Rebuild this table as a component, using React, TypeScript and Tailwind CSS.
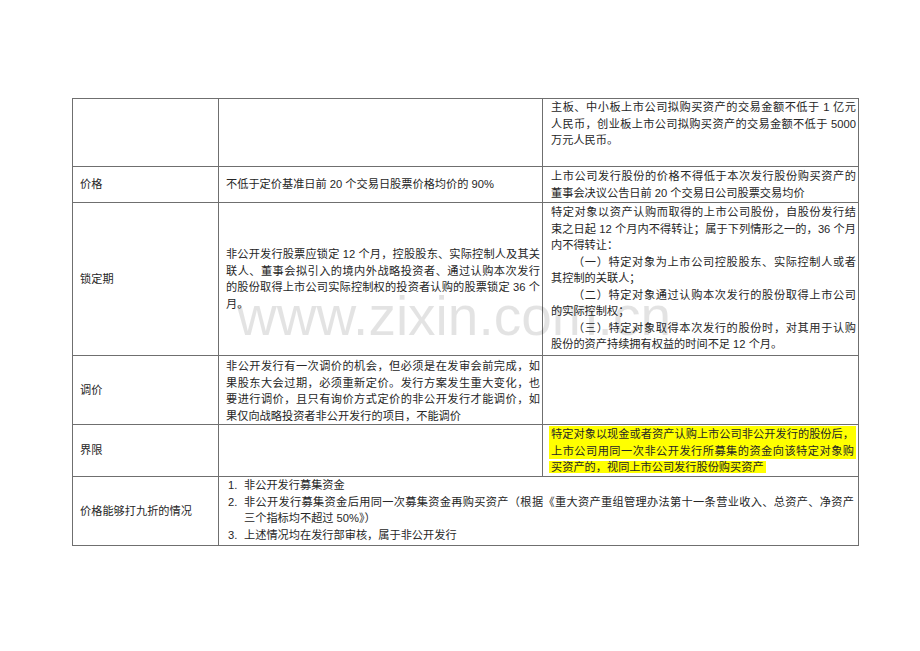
import React from "react";

const font = "font-['Liberation_Sans','Noto_Sans_CJK_SC',sans-serif]";

function Line({ text, full, indent }: { text: string; full?: boolean; indent?: boolean }) {
  return (
    <div
      className={`h-[16.5px] leading-[16.5px] ${full ? "text-justify [text-align-last:justify]" : ""} ${
        indent ? "pl-[22px]" : ""
      }`}
    >
      {text}
    </div>
  );
}

function Label({ text }: { text: string }) {
  return (
    <div className="flex items-center border-r border-b border-[#6f6f6f] pl-[7px]">
      <span>{text}</span>
    </div>
  );
}

export default function App() {
  return (
    <div className={`h-[651px] w-[920px] bg-white text-[11.2px] text-[#262626] ${font}`}>
      <div className="relative pt-[98px] pl-[72px]">
        <div className="grid w-[787px] grid-cols-[146px_324px_316px] grid-rows-[68px_36px_153px_69px_52px_69px] border-t border-l border-[#6f6f6f]">
          {/* row 1 */}
          <div className="border-r border-b border-[#6f6f6f]" />
          <div className="border-r border-b border-[#6f6f6f]" />
          <div className="border-r border-b border-[#6f6f6f] pl-2 pr-[2px]">
            <Line full text="主板、中小板上市公司拟购买资产的交易金额不低于 1 亿元" />
            <Line full text="人民币，创业板上市公司拟购买资产的交易金额不低于 5000" />
            <Line text="万元人民币。" />
          </div>

          {/* row 2 */}
          <Label text="价格" />
          <div className="flex items-center border-r border-b border-[#6f6f6f] pl-[7px]">
            不低于定价基准日前 20 个交易日股票价格均价的 90%
          </div>
          <div className="border-r border-b border-[#6f6f6f] pl-2 pr-[2px] pt-px">
            <Line full text="上市公司发行股份的价格不得低于本次发行股份购买资产的" />
            <Line text="董事会决议公告日前 20 个交易日公司股票交易均价" />
          </div>

          {/* row 3 */}
          <Label text="锁定期" />
          <div className="flex flex-col justify-center border-r border-b border-[#6f6f6f] pl-[7px] pr-[2px]">
            <Line full text="非公开发行股票应锁定 12 个月，控股股东、实际控制人及其关" />
            <Line full text="联人、董事会拟引入的境内外战略投资者、通过认购本次发行" />
            <Line full text="的股份取得上市公司实际控制权的投资者认购的股票锁定 36 个" />
            <Line text="月。" />
          </div>
          <div className="border-r border-b border-[#6f6f6f] pl-2 pr-[2px] pt-px">
            <Line full text="特定对象以资产认购而取得的上市公司股份，自股份发行结" />
            <Line full text="束之日起 12 个月内不得转让；属于下列情形之一的，36 个月" />
            <Line text="内不得转让：" />
            <Line full indent text="（一）特定对象为上市公司控股股东、实际控制人或者" />
            <Line text="其控制的关联人；" />
            <Line full indent text="（二）特定对象通过认购本次发行的股份取得上市公司" />
            <Line text="的实际控制权；" />
            <Line full indent text="（三）特定对象取得本次发行的股份时，对其用于认购" />
            <Line text="股份的资产持续拥有权益的时间不足 12 个月。" />
          </div>

          {/* row 4 */}
          <Label text="调价" />
          <div className="border-r border-b border-[#6f6f6f] pl-[7px] pr-[2px] pt-[2px]">
            <Line full text="非公开发行有一次调价的机会，但必须是在发审会前完成，如" />
            <Line full text="果股东大会过期，必须重新定价。发行方案发生重大变化，也" />
            <Line full text="要进行调价，且只有询价方式定价的非公开发行才能调价，如" />
            <Line text="果仅向战略投资者非公开发行的项目，不能调价" />
          </div>
          <div className="border-r border-b border-[#6f6f6f]" />

          {/* row 5 */}
          <Label text="界限" />
          <div className="border-r border-b border-[#6f6f6f]" />
          <div className="border-r border-b border-[#6f6f6f] pl-[6px] pr-[2px] pt-px">
            <div className="bg-[#ffff00] px-[2px]">
              <Line full text="特定对象以现金或者资产认购上市公司非公开发行的股份后，" />
              <Line full text="上市公司用同一次非公开发行所募集的资金向该特定对象购" />
            </div>
            <div className="h-[16.5px] leading-[16.5px]">
              <span className="bg-[#ffff00] px-[2px]">买资产的，视同上市公司发行股份购买资产</span>
            </div>
          </div>

          {/* row 6 */}
          <Label text="价格能够打九折的情况" />
          <div className="col-span-2 border-r border-b border-[#6f6f6f] pr-[4px]">
            <div className="flex">
              <span className="w-[25px] pl-[9px]">1.</span>
              <div className="flex-1">
                <Line text="非公开发行募集资金" />
              </div>
            </div>
            <div className="flex">
              <span className="w-[25px] pl-[9px] leading-[16.5px]">2.</span>
              <div className="flex-1">
                <Line
                  full
                  text="非公开发行募集资金后用同一次募集资金再购买资产（根据《重大资产重组管理办法第十一条营业收入、总资产、净资产"
                />
                <Line text="三个指标均不超过 50%》）" />
              </div>
            </div>
            <div className="flex">
              <span className="w-[25px] pl-[9px] leading-[16.5px]">3.</span>
              <div className="flex-1">
                <Line text="上述情况均在发行部审核，属于非公开发行" />
              </div>
            </div>
          </div>
        </div>

        <div className="pointer-events-none absolute left-[237px] top-[289px] font-['Liberation_Sans',sans-serif] text-[55px] leading-none text-[#000000]/[0.11]">
          www.zixin.com.cn
        </div>
      </div>
    </div>
  );
}
